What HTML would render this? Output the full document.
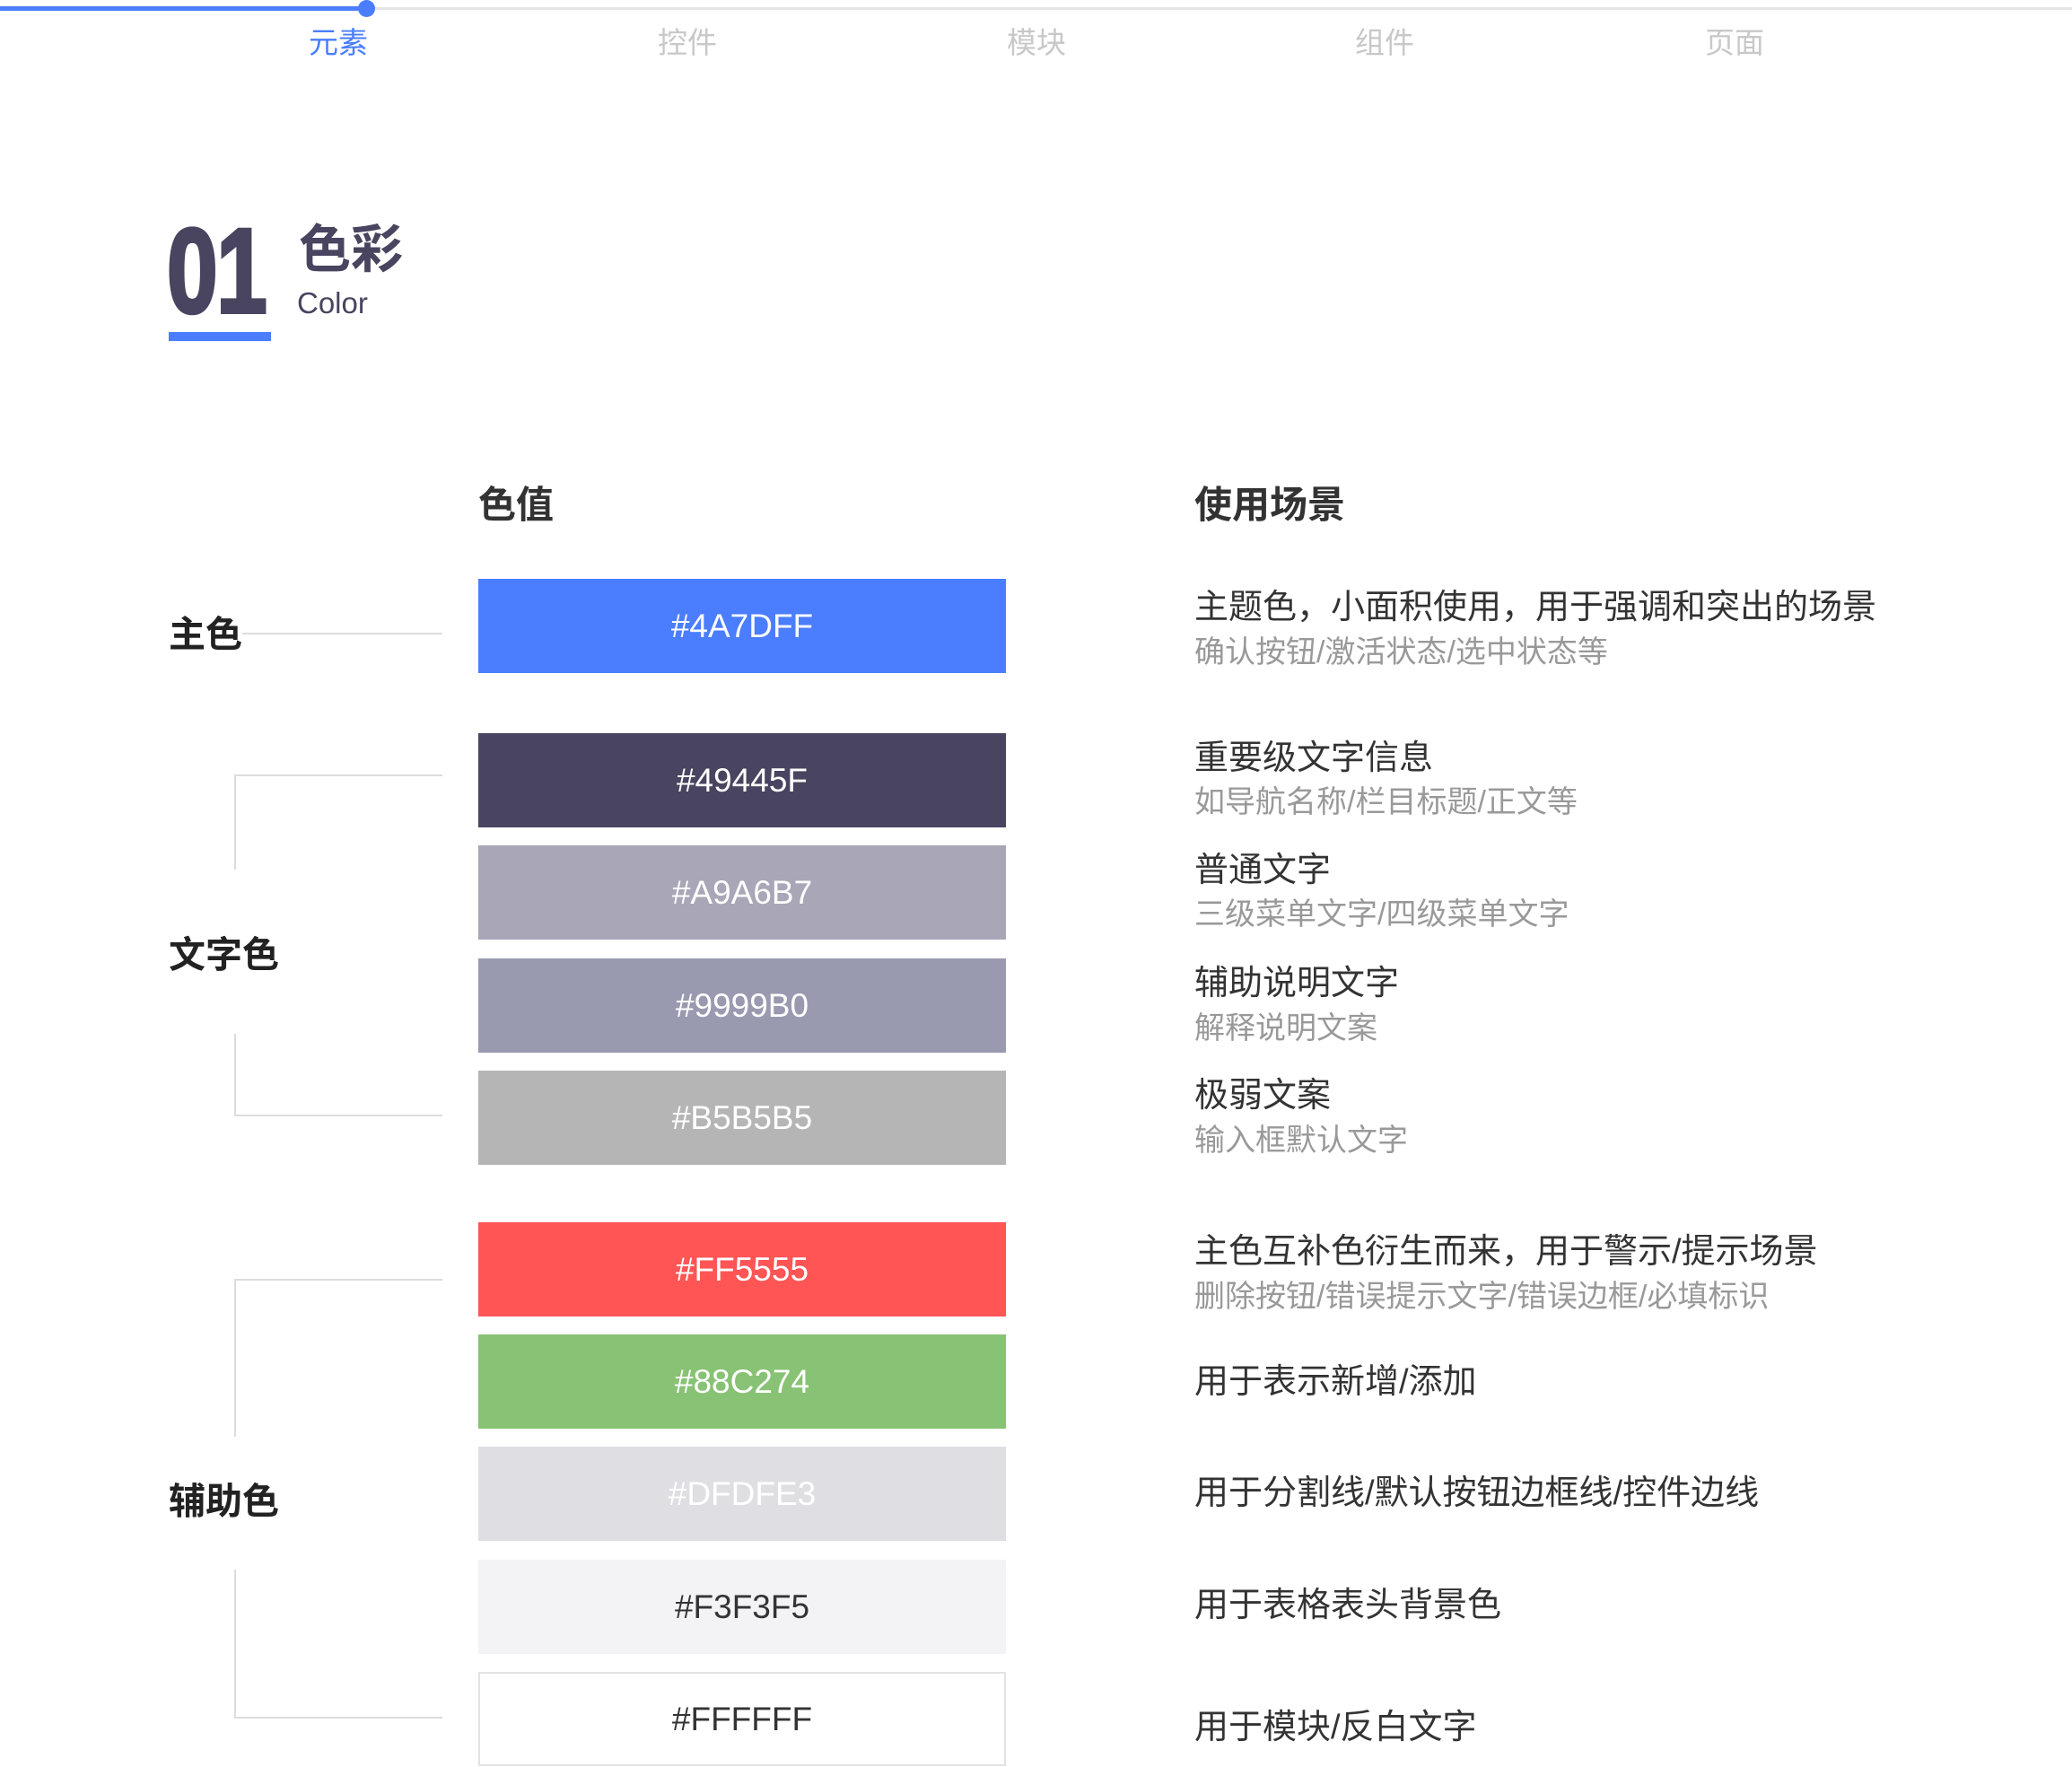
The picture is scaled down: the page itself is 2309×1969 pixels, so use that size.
<!DOCTYPE html>
<html><head><meta charset="utf-8"><style>
*{margin:0;padding:0;box-sizing:border-box}
body{width:2309px;height:1969px;background:#fff;position:relative;overflow:hidden;font-family:"Liberation Sans","Noto Sans CJK SC",sans-serif}
.a{position:absolute;white-space:nowrap;line-height:1}
.tab{font-size:33px;color:#c8c8c8;transform:translateX(-50%)}
.sw{position:absolute;left:533px;width:588px;height:105px;color:#fff;font-size:37px;display:flex;align-items:center;justify-content:center}
.t{left:1331px;font-size:38px;color:#333}
.s{left:1331px;font-size:34px;color:#999}
.lab{left:188px;font-size:41px;color:#222;font-weight:bold}
.ln{position:absolute;background:#ddd}
</style></head><body>
<div class="ln" style="left:0;top:8px;width:2309px;height:3px;background:#e6e6e6"></div>
<div class="ln" style="left:0;top:7px;width:408px;height:5px;background:#4a7dff"></div>
<div style="position:absolute;left:399px;top:0;width:19px;height:19px;border-radius:50%;background:#4a7dff"></div>
<div class="a tab" style="left:377px;top:31px;color:#4a7dff">元素</div>
<div class="a tab" style="left:766px;top:31px">控件</div>
<div class="a tab" style="left:1155px;top:31px">模块</div>
<div class="a tab" style="left:1543px;top:31px">组件</div>
<div class="a tab" style="left:1933px;top:31px">页面</div>

<div class="a" style="left:186px;top:236px;font-size:134px;font-weight:bold;color:#49445f;transform:scaleX(0.76);transform-origin:left top;letter-spacing:-2px;-webkit-text-stroke:4px #49445f">01</div>
<div class="ln" style="left:188px;top:370px;width:114px;height:10px;background:#4a7dff"></div>
<div class="a" style="left:333px;top:250px;font-size:58px;font-weight:bold;color:#49445f">色彩</div>
<div class="a" style="left:331px;top:321px;font-size:33px;color:#49445f">Color</div>

<div class="a" style="left:533px;top:542px;font-size:42px;font-weight:bold;color:#333">色值</div>
<div class="a" style="left:1331px;top:542px;font-size:42px;font-weight:bold;color:#333">使用场景</div>

<div class="a lab" style="top:687px">主色</div>
<div class="a lab" style="top:1044px">文字色</div>
<div class="a lab" style="top:1653px">辅助色</div>

<div class="ln" style="left:270px;top:705px;width:223px;height:2px"></div>
<div class="ln" style="left:261px;top:863px;width:232px;height:2px"></div>
<div class="ln" style="left:261px;top:863px;width:2px;height:106px"></div>
<div class="ln" style="left:261px;top:1152px;width:2px;height:92px"></div>
<div class="ln" style="left:261px;top:1242px;width:232px;height:2px"></div>
<div class="ln" style="left:261px;top:1425px;width:232px;height:2px"></div>
<div class="ln" style="left:261px;top:1425px;width:2px;height:176px"></div>
<div class="ln" style="left:261px;top:1749px;width:2px;height:166px"></div>
<div class="ln" style="left:261px;top:1913px;width:232px;height:2px"></div>

<div class="sw" style="top:645px;background:#4a7dff">#4A7DFF</div>
<div class="sw" style="top:817px;background:#49445f">#49445F</div>
<div class="sw" style="top:942px;background:#a9a6b7">#A9A6B7</div>
<div class="sw" style="top:1068px;background:#9999b0">#9999B0</div>
<div class="sw" style="top:1193px;background:#b5b5b5">#B5B5B5</div>
<div class="sw" style="top:1362px;background:#ff5555">#FF5555</div>
<div class="sw" style="top:1487px;background:#88c274">#88C274</div>
<div class="sw" style="top:1612px;background:#dfdfe3">#DFDFE3</div>
<div class="sw" style="top:1738px;background:#f3f3f5;color:#333">#F3F3F5</div>
<div class="sw" style="top:1863px;background:#fff;color:#333;border:2px solid #e3e3e3">#FFFFFF</div>

<div class="a t" style="top:658px">主题色，小面积使用，用于强调和突出的场景</div>
<div class="a s" style="top:710px">确认按钮/激活状态/选中状态等</div>
<div class="a t" style="top:826px">重要级文字信息</div>
<div class="a s" style="top:877px">如导航名称/栏目标题/正文等</div>
<div class="a t" style="top:951px">普通文字</div>
<div class="a s" style="top:1002px">三级菜单文字/四级菜单文字</div>
<div class="a t" style="top:1077px">辅助说明文字</div>
<div class="a s" style="top:1129px">解释说明文案</div>
<div class="a t" style="top:1202px">极弱文案</div>
<div class="a s" style="top:1254px">输入框默认文字</div>
<div class="a t" style="top:1376px">主色互补色衍生而来，用于警示/提示场景</div>
<div class="a s" style="top:1428px">删除按钮/错误提示文字/错误边框/必填标识</div>
<div class="a t" style="top:1521px">用于表示新增/添加</div>
<div class="a t" style="top:1645px">用于分割线/默认按钮边框线/控件边线</div>
<div class="a t" style="top:1770px">用于表格表头背景色</div>
<div class="a t" style="top:1906px">用于模块/反白文字</div>
</body></html>
